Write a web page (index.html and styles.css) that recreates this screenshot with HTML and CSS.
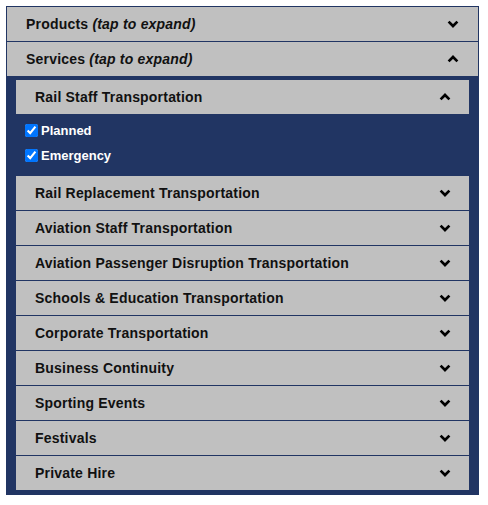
FILE: index.html
```html
<!DOCTYPE html>
<html lang="en">
  <head>
    <meta charset="utf-8" />
    <title>Products and Services</title>
    <link rel="stylesheet" href="styles.css">
  </head>
  <body>
    <div class="accordion">
      <div class="acc-head">
        <span>Products <em>(tap to expand)</em></span>
        <svg class="chev" viewBox="0 0 12 8"><polyline points="1.6,1.6 6,6 10.4,1.6" /></svg>
      </div>
      <div class="acc-head">
        <span>Services <em>(tap to expand)</em></span>
        <svg class="chev" viewBox="0 0 12 8"><polyline points="1.6,6.4 6,2 10.4,6.4" /></svg>
      </div>
      <div class="acc-body">
        <div class="sub-head open">
          <span>Rail Staff Transportation</span>
          <svg class="chev" viewBox="0 0 12 8"><polyline points="1.6,6.4 6,2 10.4,6.4" /></svg>
        </div>
        <div class="sub-body">
          <label class="check"><input type="checkbox" checked>Planned</label>
          <label class="check"><input type="checkbox" checked>Emergency</label>
        </div>
        <div class="sub-head">
          <span>Rail Replacement Transportation</span>
          <svg class="chev" viewBox="0 0 12 8"><polyline points="1.6,1.6 6,6 10.4,1.6" /></svg>
        </div>
        <div class="sub-head">
          <span>Aviation Staff Transportation</span>
          <svg class="chev" viewBox="0 0 12 8"><polyline points="1.6,1.6 6,6 10.4,1.6" /></svg>
        </div>
        <div class="sub-head">
          <span>Aviation Passenger Disruption Transportation</span>
          <svg class="chev" viewBox="0 0 12 8"><polyline points="1.6,1.6 6,6 10.4,1.6" /></svg>
        </div>
        <div class="sub-head">
          <span>Schools &amp; Education Transportation</span>
          <svg class="chev" viewBox="0 0 12 8"><polyline points="1.6,1.6 6,6 10.4,1.6" /></svg>
        </div>
        <div class="sub-head">
          <span>Corporate Transportation</span>
          <svg class="chev" viewBox="0 0 12 8"><polyline points="1.6,1.6 6,6 10.4,1.6" /></svg>
        </div>
        <div class="sub-head">
          <span>Business Continuity</span>
          <svg class="chev" viewBox="0 0 12 8"><polyline points="1.6,1.6 6,6 10.4,1.6" /></svg>
        </div>
        <div class="sub-head">
          <span>Sporting Events</span>
          <svg class="chev" viewBox="0 0 12 8"><polyline points="1.6,1.6 6,6 10.4,1.6" /></svg>
        </div>
        <div class="sub-head">
          <span>Festivals</span>
          <svg class="chev" viewBox="0 0 12 8"><polyline points="1.6,1.6 6,6 10.4,1.6" /></svg>
        </div>
        <div class="sub-head last">
          <span>Private Hire</span>
          <svg class="chev" viewBox="0 0 12 8"><polyline points="1.6,1.6 6,6 10.4,1.6" /></svg>
        </div>
      </div>
    </div>
  </body>
</html>
```

FILE: styles.css
```css
body{
  margin: 6px 0 0 6px;
  font-family: "Liberation Sans", Arial, sans-serif;
  font-weight: bold;
  font-size: 14px;
  color: #111;
}
.accordion{
  width: 471px;
  border: 1px solid #213563;
  background-color: #213563;
}
.acc-head, .sub-head{
  display: flex;
  align-items: center;
  justify-content: space-between;
  height: 34px;
  background-color: #c0c0c0;
  border-bottom: 1px solid #213563;
  box-sizing: content-box;
  letter-spacing: 0.2px;
}
.acc-head{
  padding: 0 19px 0 19px;
}
.sub-head{
  padding: 0 18px 0 19px;
}
.sub-head.open, .sub-head.last{
  border-bottom: 0;
}
em{
  font-style: italic;
}
.chev{
  width: 12px;
  height: 8px;
}
.chev polyline{
  fill: none;
  stroke: #000;
  stroke-width: 2.7;
}
.acc-body{
  padding: 3px 9px 4px 9px;
}
.sub-body{
  padding: 4px 0 8px 5px;
  color: #fff;
  font-size: 13px;
}
.check{
  display: flex;
  align-items: center;
  height: 25px;
}
.check input{
  margin: 0 3px 0 4px;
  width: 13px;
  height: 13px;
}
```
